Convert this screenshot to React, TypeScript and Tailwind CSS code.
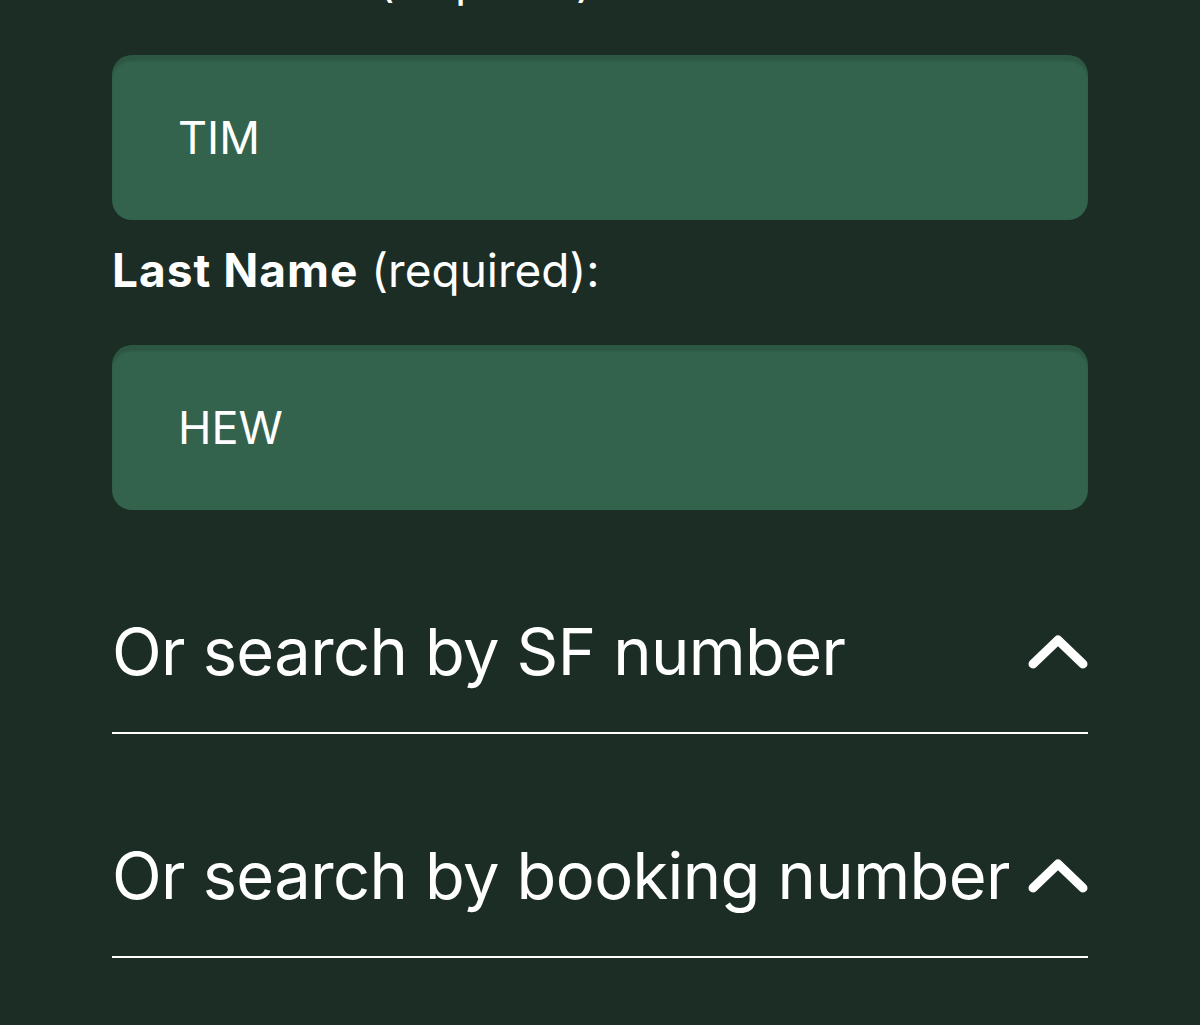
const FIELDS = [
  { label: 'First Name', value: 'TIM' },
  { label: 'Last Name', value: 'HEW' },
];

const SEARCHES = ['Or search by SF number', 'Or search by booking number'];

function Chevron() {
  return (
    <svg width="60" height="34" viewBox="0 0 60 34" className="shrink-0">
      <path d="M5 29 L30 5 L55 29" fill="none" stroke="#fff" strokeWidth="9" strokeLinecap="round" strokeLinejoin="round" />
    </svg>
  );
}

export default function App() {
  return (
    <div className="min-h-[1025px] w-full overflow-hidden bg-[#1b2d25] text-white" style={{ fontFamily: 'Inter, "Open Sans", sans-serif' }}>
      <div className="mx-[112px] -mt-[46px] flex flex-col">
        {FIELDS.map((f, i) => (
          <div key={f.label} className={i > 0 ? 'mt-[24px]' : ''}>
            <label className="block text-[46px] leading-[52px]">
              <span className="font-bold tracking-[1px]">{f.label}</span> (required):
            </label>
            <div className="mt-[49px] flex h-[165px] items-center rounded-[20px] bg-[#33634d] pl-[66px] shadow-[inset_0_6px_2px_rgba(0,0,0,0.12)]">
              <span className="text-[45px] leading-none">{f.value}</span>
            </div>
          </div>
        ))}

        {SEARCHES.map(s => (
          <button
            key={s}
            className="mt-[103px] flex w-full items-center justify-between border-b-2 border-white pb-[41px] text-left"
          >
            <span className="text-[65px] leading-[78px] tracking-[-0.6px]">{s}</span>
            <Chevron />
          </button>
        ))}
      </div>
    </div>
  );
}
